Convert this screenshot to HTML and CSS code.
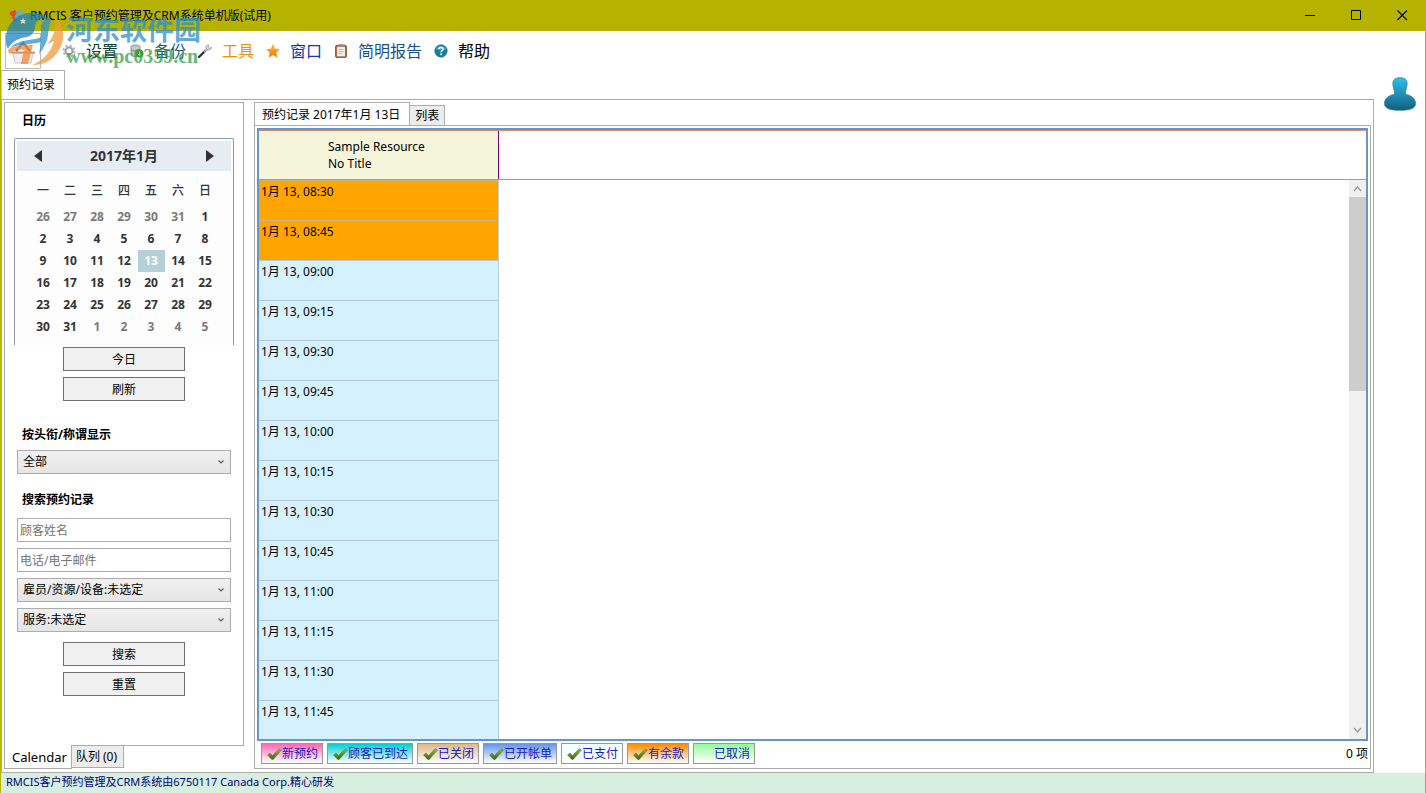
FILE: index.html
```html
<!DOCTYPE html>
<html lang="zh-CN">
<head>
<meta charset="utf-8">
<title>RMCIS 客户预约管理及CRM系统单机版(试用)</title>
<link rel="stylesheet" href="styles.css">
</head>
<body>
<svg class="defs" aria-hidden="true">
  <defs>
    <linearGradient id="gCheck" x1="0" y1="0" x2="0" y2="1"><stop offset="0" stop-color="#8fbb4e"/><stop offset="1" stop-color="#3c6412"/></linearGradient>
    <linearGradient id="gUser" x1="0" y1="0" x2="0" y2="1"><stop offset="0" stop-color="#2cc0f0"/><stop offset="1" stop-color="#125f7d"/></linearGradient>
    <linearGradient id="gStar" x1="0" y1="0" x2="0" y2="1"><stop offset="0" stop-color="#ffbe3c"/><stop offset="1" stop-color="#e87800"/></linearGradient>
    <symbol id="check" viewBox="0 0 16 16"><path d="M1.500 9 L4 7 L6.500 9.500 L13 2.800 L15.500 4 L7.200 13.500 L5.800 13.500 Z" fill="url(#gCheck)" stroke="#557f28" stroke-width=".5" stroke-linejoin="round"/></symbol>
    <symbol id="chev" viewBox="0 0 8 8"><path d="M1.500 2.500 L4 5 L6.500 2.500" fill="none" stroke="#606060" stroke-width="1.200"/></symbol>
  </defs>
</svg>
<div class="window">
  <header class="titlebar">
    <svg class="app-icon" viewBox="0 0 16 16"><path d="M1 4 L6 2 L8 5 L5 9 L1 7Z" fill="#e5482d"/><path d="M7 5 L12 1 L14 4 L10 8Z" fill="#4cb4e8"/><path d="M5 9 L9 6 L14 11 L10 14Z" fill="#5aa6d8"/><path d="M2 9 L5 8 L9 13 L6 14Z" fill="#d85a35"/></svg>
    <h1 class="title">RMCIS 客户预约管理及CRM系统单机版(试用)</h1>
    <div class="win-buttons">
      <button aria-label="最小化"><svg viewBox="0 0 11 11"><path d="M0 5.500H10" stroke="#000"/></svg></button>
      <button aria-label="最大化"><svg viewBox="0 0 11 11"><path d="M.5 .5H9.500V9.500H.5Z" fill="none" stroke="#000"/></svg></button>
      <button aria-label="关闭"><svg viewBox="0 0 11 11"><path d="M.5 .5L10 10M10 .5L.5 10" stroke="#000" stroke-width="1.100"/></svg></button>
    </div>
  </header>

  <nav class="toolbar">
    <button class="home" aria-label="主页"><svg viewBox="0 0 28 28"><path d="M4 16H24L22 26H6Z" fill="#ededed" stroke="#c8c8c8"/><path d="M7 14 L14 6 L21 14" fill="none" stroke="#667" stroke-width="2.500"/><path d="M2 15.500H26" stroke="#e08a68" stroke-width="2"/></svg></button>
    <button class="tool t-set"><svg viewBox="0 0 14 14"><circle cx="7" cy="7" r="5.500" fill="none" stroke="#b5b5b5" stroke-width="2" stroke-dasharray="2.300 2"/><circle cx="7" cy="7" r="3.500" fill="none" stroke="#a0a0a0" stroke-width="2"/></svg>设置</button>
    <button class="tool t-back"><svg viewBox="0 0 14 14"><path d="M1 2.500C1 .5 10 .5 10 2.500V11C10 13 1 13 1 11Z" fill="#c4c8c8" stroke="#777" stroke-width=".7"/><path d="M1 6C3 7.500 8 7.500 10 6" fill="none" stroke="#777"/><circle cx="9.500" cy="9.500" r="4" fill="#3f9a25"/><path d="M9.500 7V11M7.700 9.700L9.500 11.500L11.300 9.700" fill="none" stroke="#d9f5c8"/></svg>备份</button>
    <button class="tool t-tool"><svg viewBox="0 0 14 14"><path d="M1 13L7 7" stroke="#333" stroke-width="2.400" stroke-linecap="round"/><path d="M6 8L9.500 5" stroke="#aaa" stroke-width="1.800"/><path d="M11 1C7.500 .5 7 4 9 5.500C11 7 13.800 5.500 13.300 3L11.500 4.500L10 3Z" fill="#d4d4d4" stroke="#888" stroke-width=".6"/></svg>工具</button>
    <button class="tool t-win"><svg viewBox="0 0 14 14"><path d="M7 .8L8.900 5.100L13.300 5.500L10 8.600L11 13.200L7 10.800L3 13.200L4 8.600L.7 5.500L5.100 5.100Z" fill="url(#gStar)" stroke="#ea8a10" stroke-width=".5"/></svg>窗口</button>
    <button class="tool t-rep"><svg viewBox="0 0 14 14"><rect x="1.500" y="1.200" width="11" height="12.300" rx="1.500" fill="#a96b42" stroke="#71401f" stroke-width=".7"/><rect x="3" y="2.800" width="8" height="9.500" fill="#ececec"/><rect x="4.500" y=".3" width="5" height="2.300" rx=".6" fill="#8d8d8d"/><path d="M4.500 5.500H9.500M4.500 7.500H9.500M4.500 9.500H8" stroke="#aaa" stroke-width=".7"/></svg>简明报告</button>
    <button class="tool t-help"><svg viewBox="0 0 14 14"><circle cx="7" cy="7" r="6.200" fill="#16809f" stroke="#0c627e" stroke-width=".6"/><path d="M2 5.500A5.300 5.300 0 0 1 12 5.500Z" fill="#45aeca"/><path d="M5 5.300C5 2.800 9.200 2.900 9 5.300C8.900 6.700 7.100 6.700 7.100 8.300" fill="none" stroke="#fff" stroke-width="1.500"/><circle cx="7.100" cy="10.300" r=".95" fill="#fff"/></svg>帮助</button>
  </nav>

  <div class="workspace">
    <div class="doc">
      <div class="doc-tabs"><button class="doc-tab">预约记录</button></div>
      <main class="frame">
        <aside class="side">
          <section class="side-body">
            <h2 class="label">日历</h2>
            <div class="calendar">
              <div class="cal-head">
                <button aria-label="上个月"><svg viewBox="0 0 8 12"><path d="M8 0V12L0 6Z" fill="#333"/></svg></button>
                <strong>2017年1月</strong>
                <button aria-label="下个月"><svg viewBox="0 0 8 12"><path d="M0 0V12L8 6Z" fill="#333"/></svg></button>
              </div>
              <table class="cal-table">
                <thead><tr><th>一</th><th>二</th><th>三</th><th>四</th><th>五</th><th>六</th><th>日</th></tr></thead>
                <tbody>
                  <tr><td class="out">26</td><td class="out">27</td><td class="out">28</td><td class="out">29</td><td class="out">30</td><td class="out">31</td><td>1</td></tr>
                  <tr><td>2</td><td>3</td><td>4</td><td>5</td><td>6</td><td>7</td><td>8</td></tr>
                  <tr><td>9</td><td>10</td><td>11</td><td>12</td><td class="sel">13</td><td>14</td><td>15</td></tr>
                  <tr><td>16</td><td>17</td><td>18</td><td>19</td><td>20</td><td>21</td><td>22</td></tr>
                  <tr><td>23</td><td>24</td><td>25</td><td>26</td><td>27</td><td>28</td><td>29</td></tr>
                  <tr><td>30</td><td>31</td><td class="out">1</td><td class="out">2</td><td class="out">3</td><td class="out">4</td><td class="out">5</td></tr>
                </tbody>
              </table>
            </div>
            <div class="actions actions-top"><button class="btn">今日</button><button class="btn">刷新</button></div>
            <label class="label label-title" for="title">按头衔/称谓显示</label>
            <div class="fields">
              <span class="combo"><select id="title"><option>全部</option></select><svg><use href="#chev"/></svg></span>
            </div>
            <h2 class="label label-search">搜索预约记录</h2>
            <div class="fields">
              <input type="text" placeholder="顾客姓名" aria-label="顾客姓名">
              <input type="text" placeholder="电话/电子邮件" aria-label="电话/电子邮件">
              <span class="combo"><select aria-label="雇员/资源/设备"><option>雇员/资源/设备:未选定</option></select><svg><use href="#chev"/></svg></span>
              <span class="combo"><select aria-label="服务"><option>服务:未选定</option></select><svg><use href="#chev"/></svg></span>
            </div>
            <div class="actions actions-bottom"><button class="btn">搜索</button><button class="btn">重置</button></div>
          </section>
          <div class="side-tabs"><button class="side-tab active">Calendar</button><button class="side-tab">队列 (0)</button></div>
        </aside>

        <section class="content">
          <div class="view-tabs"><button class="view-tab active">预约记录 2017年1月 13日</button><button class="view-tab">列表</button></div>
          <div class="view">
            <div class="schedule">
              <div class="sched-head"><div class="resource">Sample Resource<br>No Title</div></div>
              <div class="sched-body">
                <ul class="slots">
                  <li class="past">1月 13, 08:30</li><li class="past">1月 13, 08:45</li><li>1月 13, 09:00</li><li>1月 13, 09:15</li><li>1月 13, 09:30</li><li>1月 13, 09:45</li><li>1月 13, 10:00</li><li>1月 13, 10:15</li><li>1月 13, 10:30</li><li>1月 13, 10:45</li><li>1月 13, 11:00</li><li>1月 13, 11:15</li><li>1月 13, 11:30</li><li>1月 13, 11:45</li>
                </ul>
                <div class="scroll">
                  <svg viewBox="0 0 17 17"><path d="M5 11L8.500 7L12 11" fill="none" stroke="#999" stroke-width="1.400"/></svg>
                  <div class="track"><div class="thumb"></div></div>
                  <svg viewBox="0 0 17 17"><path d="M5 6L8.500 10L12 6" fill="none" stroke="#999" stroke-width="1.400"/></svg>
                </div>
              </div>
            </div>
            <footer class="legend">
              <button class="chip c-new"><svg><use href="#check"/></svg>新预约</button>
              <button class="chip c-arrived"><svg><use href="#check"/></svg>顾客已到达</button>
              <button class="chip c-closed"><svg><use href="#check"/></svg>已关闭</button>
              <button class="chip c-billed"><svg><use href="#check"/></svg>已开帐单</button>
              <button class="chip c-paid"><svg><use href="#check"/></svg>已支付</button>
              <button class="chip c-due"><svg><use href="#check"/></svg>有余款</button>
              <button class="chip c-cancel"><svg></svg>已取消</button>
              <span class="count">0 项</span>
            </footer>
          </div>
        </section>
      </main>
    </div>
    <div class="user-col">
      <button aria-label="用户"><svg viewBox="0 0 34 34"><path d="M17 .8C22.500 .8 24.500 3 24 8C23.500 12 22.300 13.500 22.300 17.500C28 18 32.500 21.500 32.500 26.500C32.500 31.500 27 33.300 17 33.300S1.500 31.500 1.500 26.500C1.500 21.500 6 18 11.700 17.500C11.700 13.500 10.500 12 10 8C9.500 3 11.500 .8 17 .8Z" fill="url(#gUser)" stroke="#2b7c98" stroke-width=".8"/></svg></button>
    </div>
  </div>
  <div class="status">RMCIS客户预约管理及CRM系统由6750117 Canada Corp.精心研发</div>

  <div class="watermark">
    <svg viewBox="0 0 58 58"><path d="M1 31C1 15 14 3 30 5C37 6 41 8 44 11C36 9 31 12 30 18C30 23 28 27 22 29C13 30 6 34 3 41C1 38 1 35 1 31Z" fill="#1d82c2"/><path d="M44 10C38 11 36 15 36 21V29C30 33 15 30 5 40C15 35 25 37 36 34L34 46C36 44 40 38 42 32C44 26 43 16 46 13Z" fill="#2a95cf"/><path d="M49 8C59 15 61 31 54 42C49 51 40 57 27 57C39 52 46 44 49 33C43 36 42 36 42 36C50 28 52 17 49 8Z" fill="#f29a3c"/><path d="M3 42C11 36 21 36 28 37L23 56H16L19 42C13 41 8 42 4 46Z" fill="#f08a3a"/><path d="M18 10L19 12L21 12L19.500 13.500L20 16L18 14.700L16 16L16.500 13.500L15 12L17 12Z" fill="#fff"/></svg>
    <div class="wm-text"><span class="wm-name">河东软件园</span><span class="wm-url">www.pc0359.cn</span></div>
  </div>
</div>
</body>
</html>
```

FILE: styles.css
```css
* { box-sizing: border-box; }
body { margin: 0; font: 12px/16px "Noto Sans", "Noto Sans CJK SC", sans-serif; color: #000; background: #fff; }
button, input, select { font: inherit; color: inherit; margin: 0; padding: 0; border-radius: 0; }
button { border: 0; background: none; white-space: nowrap; }
h1, h2, ul { margin: 0; padding: 0; font-size: 12px; }
svg { display: block; flex: none; }
.defs { position: absolute; width: 0; height: 0; }

.window { position: relative; display: flex; flex-direction: column; min-height: 100vh; border: 1px solid #b5b300; border-top: 0; }
.titlebar { display: flex; align-items: center; height: 31px; padding-left: 8px; background: #b5b300; }
.app-icon { width: 16px; height: 16px; margin-right: 5px; }
.title { flex: 1; font-weight: 400; }
.win-buttons { display: flex; }
.win-buttons button { width: 46px; height: 31px; display: grid; place-items: center; }
.win-buttons svg { width: 11px; height: 11px; }

.toolbar { display: flex; align-items: center; gap: 12px; height: 39px; padding: 1px 4px 0; }
.home { width: 36px; height: 36px; margin-right: 9px; border: 1px solid #bbb; display: grid; place-items: center; }
.home svg { width: 28px; height: 28px; }
.tool { display: flex; align-items: center; gap: 10px; font-size: 16px; line-height: 24px; }
.tool svg { width: 14px; height: 14px; }
.t-set { color: #0c3a2c; }
.t-back { color: #14607c; }
.t-tool { color: #f39200; }
.t-win { color: #0b35c0; }
.t-rep { color: #14508a; }

.workspace { flex: 1; display: flex; }
.doc { flex: 1; display: flex; flex-direction: column; min-width: 0; }
.doc-tabs { display: flex; height: 29px; }
.doc-tab { padding: 0 9px 0 5px; border: 1px solid #acacac; border-bottom: 0; border-left-color: #ccc; }
.frame { flex: 1; display: flex; gap: 10px; padding: 2px 2px 3px; border: 1px solid #acacac; }
.user-col { width: 51px; padding: 7px 9px; }
.user-col svg { width: 34px; height: 34px; }

.side { width: 240px; display: flex; flex-direction: column; }
.side-body { flex: 1; padding: 6px 9px 0; border: 1px solid #acacac; }
.label { display: block; padding-left: 8px; line-height: 24px; font-weight: 700; }
.calendar { height: 207px; margin-top: 5px; padding: 2px; border: 1px solid #8e9dab; border-bottom: 0; border-radius: 2px 2px 0 0; background: #fdfdfd; color: #333; }
.cal-head { display: flex; align-items: center; justify-content: space-between; height: 30px; padding: 0 17px; background: #e7ecf2; font-size: 14px; }
.cal-head svg { width: 8px; height: 12px; }
.cal-table { margin: 9px auto 0; width: 189px; border-collapse: collapse; table-layout: fixed; font-family: "Open Sans", "Noto Sans CJK SC", sans-serif; font-weight: 700; text-align: center; }
.cal-table th, .cal-table td { padding: 0; height: 22px; }
.cal-table th { height: 26px; padding-bottom: 4px; font-weight: 500; }
.cal-table .out { color: #7a7a7a; }
.cal-table .sel { background: #b7cfd9; color: #fff; }
.actions { display: flex; flex-direction: column; align-items: center; gap: 6px; }
.actions-top { margin-top: 2px; }
.actions-bottom { margin-top: 10px; }
.btn { width: 122px; height: 24px; padding-top: 2px; border: 1px solid #707070; background: #f0f0f0; }
.label-title { margin-top: 22px; }
.label-search { margin-top: 14px; }
.fields { display: grid; gap: 6px; margin: 3px 3px 0; }
.label-search + .fields { margin-top: 6px; }
.fields input { width: 100%; height: 24px; padding: 0 2px; border: 1px solid #abadb3; background: #fff; }
.fields input::placeholder { color: #757575; opacity: 1; }
.combo { display: grid; align-items: center; }
.combo select { grid-area: 1 / 1; appearance: none; width: 100%; height: 24px; padding: 0 5px; border: 1px solid #acacac; background: linear-gradient(#f0f0f0, #e5e5e5); }
.combo svg { grid-area: 1 / 1; justify-self: end; width: 8px; height: 8px; margin-right: 6px; pointer-events: none; }
.side-tabs { display: flex; align-items: flex-start; height: 23px; }
.side-tab { height: 22px; padding: 0 6px 0 4px; border: 1px solid #acacac; border-top: 0; border-left: 0; background: #ececec; }
.side-tab.active { height: 24px; margin-top: -1px; padding: 0 4px 0 7px; border-left: 1px solid #acacac; background: #fff; font-size: 13px; }

.content { flex: 1; display: flex; flex-direction: column; min-width: 0; }
.view-tabs { display: flex; align-items: flex-end; height: 23px; }
.view-tab { height: 20px; padding: 0 5px; border: 1px solid #acacac; border-left: 0; border-bottom: 0; background: #ececec; }
.view-tab.active { height: 24px; margin-bottom: -1px; padding: 0 9px 0 7px; border-left: 1px solid #acacac; background: #fff; }
.view { flex: 1; display: flex; flex-direction: column; padding: 2px 2px 4px; border: 1px solid #acacac; }
.schedule { flex: 1; display: flex; flex-direction: column; border: 2px solid #6495d0; }
.sched-head { height: 50px; border-top: 1px solid #cf8f68; border-bottom: 1px solid #cf8f68; }
.resource { width: 240px; height: 48px; padding: 7px 0 0 69px; border-right: 1px solid #800080; background: #f5f5dc; line-height: 17px; }
.sched-body { flex: 1; display: flex; justify-content: space-between; }
.slots { width: 240px; list-style: none; border-right: 1px solid #b8cfdb; background: #d4f1fd; }
.slots li { height: 40px; padding: 3px 2px; border-top: 1px solid #b4c8d4; }
.slots .past { background: #ffa500; border-color: #c5b27d; }
.slots li:last-child { height: 39px; }
.scroll { display: flex; flex-direction: column; width: 17px; background: #f0f0f0; }
.scroll svg { width: 17px; height: 17px; }
.track { flex: 1; }
.thumb { height: 37%; background: #cdcdcd; }
.legend { display: flex; align-items: center; gap: 4px; padding: 2px 0 0 4px; }
.chip { display: flex; align-items: center; height: 21px; padding: 0 4px; border: 1px solid #999; color: #1420c8; }
.chip svg { width: 16px; height: 16px; }
.c-new { background: linear-gradient(#ff69b4, #fff); }
.c-arrived { background: linear-gradient(#00ced1, #fff); }
.c-closed { background: linear-gradient(#deb887, #fff); }
.c-billed { background: linear-gradient(#6495ed, #fff); }
.c-paid { background: linear-gradient(#f0ffff, #fff); }
.c-due { background: linear-gradient(#ff8c00, #fff); }
.c-cancel { background: linear-gradient(#98fb98, #fff); }
.count { margin-left: auto; }
.status { height: 20px; padding-left: 5px; line-height: 18px; background: #d7efdf; color: #000080; font-size: 11px; }

.watermark { position: absolute; left: 4px; top: 8px; display: flex; gap: 3px; opacity: .75; pointer-events: none; }
.watermark svg { width: 58px; height: 58px; }
.wm-text { display: flex; flex-direction: column; padding-top: 5px; }
.wm-name { font: 700 27px/32px "Noto Sans CJK SC", sans-serif; color: #2b8fcf; }
.wm-url { font: 700 20px/22px "Liberation Serif", serif; color: #38a048; }
```
